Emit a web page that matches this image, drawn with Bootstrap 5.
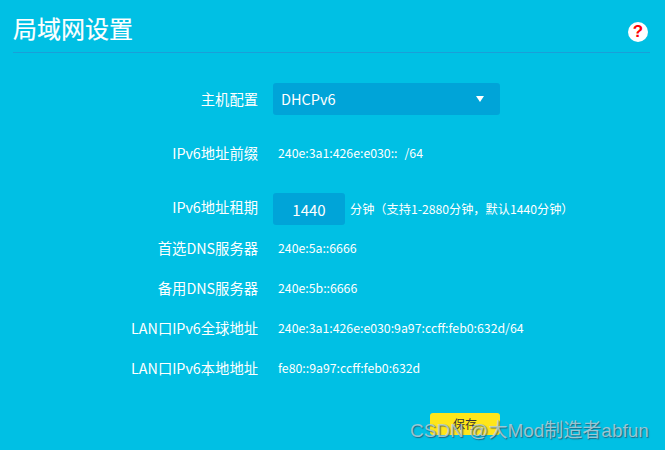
<!DOCTYPE html>
<html lang="zh">
<head>
<meta charset="utf-8">
<title>局域网设置</title>
<link rel="stylesheet" href="https://cdn.jsdelivr.net/npm/bootstrap@5.3.0/dist/css/bootstrap.min.css">
<style>
html,body{height:100%;overflow:hidden}
body{background:#00c0e4;color:#fff;font-family:"Noto Sans CJK SC","Open Sans",sans-serif;font-size:14px;position:relative}
.page-wrap{padding:0 15px 0 13px}
.title-bar{height:53px;border-bottom:1px solid #1a9fd8}
.title-text{font-size:24px;line-height:32px;font-weight:400;margin:0;padding-top:12px;-webkit-text-stroke:.2px #fff}
.help-dot{width:20px;height:20px;background:#fff;border-radius:50%;color:#f00;font-weight:700;font-size:17px;line-height:20px;text-align:center;margin:22px 2px 0 0;font-family:"Liberation Sans",sans-serif}
.form-zone{padding-top:30px;margin-left:-13px}
.set-row{height:32px;margin-bottom:8px}
.set-row.gap-a{margin-bottom:22px}
.set-row.gap-b{margin-bottom:24px}
.set-row.gap-c{margin-bottom:7px}
.lbl{width:258px;text-align:right;flex:none;font-size:14.3px}
.lbl.lift{padding-bottom:4px}
.val{margin-left:20px;font-size:12.3px}
.suffix-part{margin-left:7px}
.sel-box{margin-left:15px;width:227px;height:32px;background:#00a4d8;border-radius:3px;padding:0 8px;font-size:14.5px}
.caret-tri{width:0;height:0;border-left:4.5px solid transparent;border-right:4.5px solid transparent;border-top:6px solid #fff;margin-right:8px}
.lease-box{margin-left:15px;width:72px;height:32px;background:#00a4d8;border-radius:3px;text-align:center;line-height:33px;font-size:15px}
.unit-note{margin-left:5px;font-size:12.2px}
.save-btn{position:absolute;left:430px;top:413px;width:70px;height:22px;background:#ffe61a;border:0;border-radius:3px;color:#333;font-size:12px;line-height:22px;padding:0}
.wm{position:absolute;left:410px;top:419px;font-size:19px;line-height:24px;color:rgba(180,205,215,.85);text-shadow:1px 1px 1px rgba(40,70,90,.7);font-family:"Liberation Sans","Noto Sans CJK SC",sans-serif;white-space:nowrap}
</style>
</head>
<body>
<div class="page-wrap">
  <div class="title-bar d-flex justify-content-between align-items-start">
    <h1 class="title-text">局域网设置</h1>
    <div class="help-dot">?</div>
  </div>
  <div class="form-zone">
    <div class="set-row gap-a d-flex align-items-center">
      <div class="lbl">主机配置</div>
      <div class="sel-box d-flex justify-content-between align-items-center"><span>DHCPv6</span><span class="caret-tri"></span></div>
    </div>
    <div class="set-row gap-b d-flex align-items-center">
      <div class="lbl">IPv6地址前缀</div>
      <div class="val">240e:3a1:426e:e030::<span class="suffix-part">/64</span></div>
    </div>
    <div class="set-row gap-c d-flex align-items-center">
      <div class="lbl lift">IPv6地址租期</div>
      <div class="lease-box">1440</div>
      <div class="unit-note">分钟（支持1-2880分钟，默认1440分钟）</div>
    </div>
    <div class="set-row d-flex align-items-center">
      <div class="lbl">首选DNS服务器</div>
      <div class="val">240e:5a::6666</div>
    </div>
    <div class="set-row d-flex align-items-center">
      <div class="lbl">备用DNS服务器</div>
      <div class="val">240e:5b::6666</div>
    </div>
    <div class="set-row d-flex align-items-center">
      <div class="lbl">LAN口IPv6全球地址</div>
      <div class="val">240e:3a1:426e:e030:9a97:ccff:feb0:632d/64</div>
    </div>
    <div class="set-row d-flex align-items-center">
      <div class="lbl">LAN口IPv6本地地址</div>
      <div class="val">fe80::9a97:ccff:feb0:632d</div>
    </div>
  </div>
</div>
<button class="btn save-btn">保存</button>
<div class="wm">CSDN @大Mod制造者abfun</div>
<script src="https://cdn.jsdelivr.net/npm/bootstrap@5.3.0/dist/js/bootstrap.bundle.min.js"></script>
</body>
</html>
